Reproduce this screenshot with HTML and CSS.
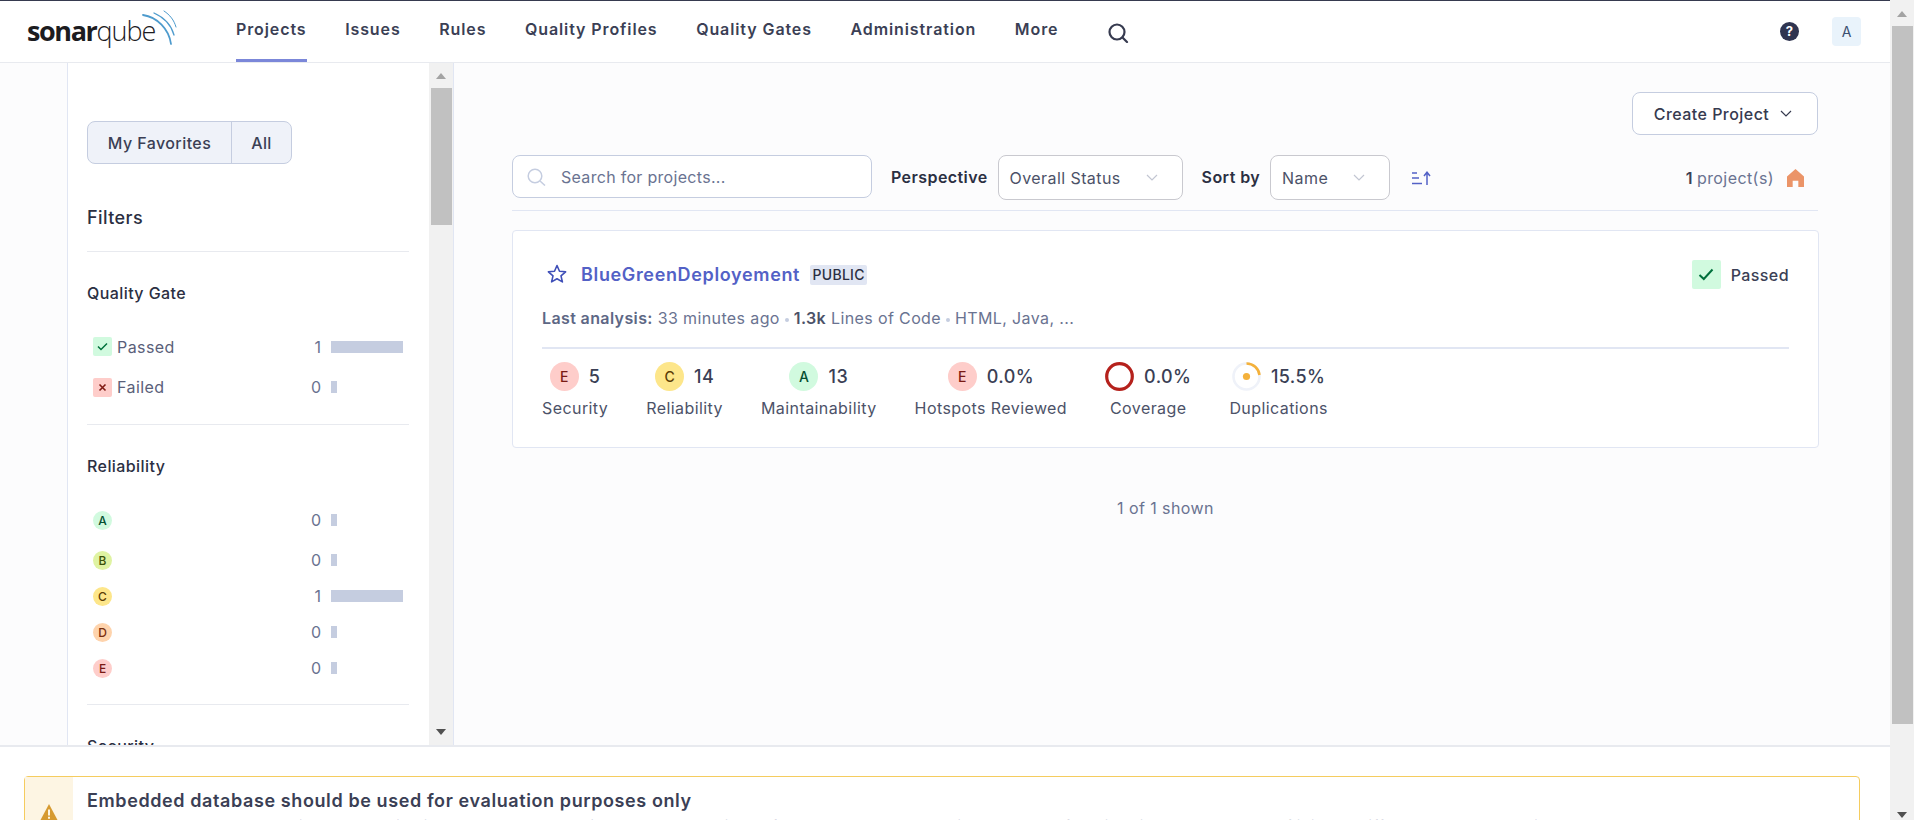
FILE: index.html
```html
<!DOCTYPE html>
<html lang="en">
<head>
<meta charset="utf-8">
<title>Projects - SonarQube</title>
<link rel="stylesheet" href="styles.css">
</head>
<body>
<div class="viewport">
  <header class="topbar">
    <a class="logo">
      <span class="logo-sonar">sonar</span><span class="logo-qube">qube</span>
      <svg class="logo-waves" width="40" height="40" viewBox="0 0 40 40" fill="none" stroke="#4e9bcd" stroke-linecap="round">
        <path d="M1 7C15 9 27 21 29 36" stroke-width="1.8"/>
        <path d="M12 5C21 9 29 16 32 27" stroke-width="1.3"/>
        <path d="M22 3C28 7 32 12 34 19" stroke-width="1"/>
      </svg>
    </a>
    <nav class="nav">
      <a class="nav-item active">Projects</a>
      <a class="nav-item">Issues</a>
      <a class="nav-item">Rules</a>
      <a class="nav-item">Quality Profiles</a>
      <a class="nav-item">Quality Gates</a>
      <a class="nav-item">Administration</a>
      <a class="nav-item">More</a>
    </nav>
    <svg class="nav-search" width="22" height="20" viewBox="0 0 22 20" fill="none" stroke="#363a4f" stroke-width="2.2"><circle cx="10" cy="9" r="7.5"/><path d="M15.5 14.5L20 19" stroke-linecap="round"/></svg>
    <div class="topbar-right">
      <span class="help">?</span>
      <span class="avatar">A</span>
    </div>
  </header>

  <div class="content">
    <div class="rail"></div>
    <aside class="sidebar">
      <div class="sidebar-inner">
        <div class="toggle"><span class="toggle-item">My Favorites</span><span class="toggle-item">All</span></div>
        <h2 class="filters-title">Filters</h2>
        <section class="facet">
          <h3 class="facet-title">Quality Gate</h3>
          <div class="facet-row r41"><span class="sq green"><svg width="11" height="9" viewBox="0 0 11 9" fill="none" stroke="#00703c" stroke-width="1.5"><path d="M1 4.5L4 7.5L10 1.5"/></svg></span><span class="facet-label">Passed</span><span class="count">1</span><span class="bar-cell"><i class="bar full"></i></span></div>
          <div class="facet-row r40"><span class="sq red"><svg width="9" height="9" viewBox="0 0 9 9" fill="none" stroke="#801b14" stroke-width="1.6"><path d="M1.5 1.5L7.5 7.5M7.5 1.5L1.5 7.5"/></svg></span><span class="facet-label">Failed</span><span class="count">0</span><span class="bar-cell"><i class="bar"></i></span></div>
        </section>
        <section class="facet rel">
          <h3 class="facet-title">Reliability</h3>
          <div class="facet-row r44"><span class="badge-sm a">A</span><span class="spacer"></span><span class="count">0</span><span class="bar-cell"><i class="bar"></i></span></div>
          <div class="facet-row r36"><span class="badge-sm b">B</span><span class="spacer"></span><span class="count">0</span><span class="bar-cell"><i class="bar"></i></span></div>
          <div class="facet-row r36"><span class="badge-sm c">C</span><span class="spacer"></span><span class="count">1</span><span class="bar-cell"><i class="bar full"></i></span></div>
          <div class="facet-row r36"><span class="badge-sm d">D</span><span class="spacer"></span><span class="count">0</span><span class="bar-cell"><i class="bar"></i></span></div>
          <div class="facet-row r36"><span class="badge-sm e">E</span><span class="spacer"></span><span class="count">0</span><span class="bar-cell"><i class="bar"></i></span></div>
        </section>
        <section class="facet last"><h3 class="facet-title">Security</h3></section>
      </div>
      <div class="scroll scroll-side">
        <i class="arrow up light"></i><i class="thumb side-thumb"></i><i class="grow"></i><i class="arrow down"></i>
      </div>
    </aside>

    <main class="main">
      <div class="actions">
        <button class="btn-create">Create Project<svg width="12" height="7" viewBox="0 0 12 7" fill="none" stroke="#363a4f" stroke-width="1.2"><path d="M1 1L6 6L11 1"/></svg></button>
      </div>
      <div class="toolbar">
        <label class="search">
          <svg width="20" height="18" viewBox="0 0 20 18" fill="none" stroke="#c5cde0" stroke-width="1.5"><circle cx="8" cy="8" r="6.8"/><path d="M13 13L18 17.5"/></svg>
          <span class="placeholder">Search for projects...</span>
        </label>
        <span class="tb-label first">Perspective</span>
        <div class="select w-persp"><span>Overall Status</span><svg width="12" height="7" viewBox="0 0 12 7" fill="none" stroke="#c2c6d2" stroke-width="1.2"><path d="M1 1L6 6L11 1"/></svg></div>
        <span class="tb-label">Sort by</span>
        <div class="select w-sort"><span>Name</span><svg width="12" height="7" viewBox="0 0 12 7" fill="none" stroke="#c2c6d2" stroke-width="1.2"><path d="M1 1L6 6L11 1"/></svg></div>
        <svg class="sort-icon" width="20" height="14" viewBox="0 0 20 14" fill="none" stroke="#5361c6" stroke-width="1.5"><path d="M1 2H6M1 7H8M1 12.5H11"/><path d="M16 14V1.5M13 5L16 1.2L19 5"/></svg>
        <div class="total"><b>1</b> <span>project(s)</span>
          <svg width="17" height="18" viewBox="0 0 18 19"><path fill="#eb9468" d="M9 0L18 8V19H12V12.5H6V19H0V8Z"/></svg>
        </div>
      </div>

      <article class="card">
        <div class="card-head">
          <svg class="star" width="20" height="19" viewBox="0 0 20 19" fill="none" stroke="#3f4fb8" stroke-width="1.6" stroke-linejoin="round"><path d="M10 1.5L12.5 7.2L18.6 7.8L14 11.9L15.4 17.9L10 14.8L4.6 17.9L6 11.9L1.4 7.8L7.5 7.2Z"/></svg>
          <a class="project-name">BlueGreenDeployement</a>
          <span class="tag">PUBLIC</span>
          <span class="qg"><span class="qg-icon"><svg width="16" height="13" viewBox="0 0 16 13" fill="none" stroke="#00703c" stroke-width="2"><path d="M1.5 7L5.8 11L14.5 1.5"/></svg></span>Passed</span>
        </div>
        <p class="meta"><b>Last analysis:</b> 33 minutes ago<i class="dot"></i><b class="dark">1.3k</b> Lines of Code<i class="dot"></i>HTML, Java, ...</p>
        <div class="measures">
          <div class="measure"><div class="m-top"><span class="badge e">E</span><span class="m-val">5</span></div><div class="m-label">Security</div></div>
          <div class="measure"><div class="m-top"><span class="badge c">C</span><span class="m-val">14</span></div><div class="m-label">Reliability</div></div>
          <div class="measure"><div class="m-top"><span class="badge a">A</span><span class="m-val">13</span></div><div class="m-label">Maintainability</div></div>
          <div class="measure"><div class="m-top"><span class="badge e">E</span><span class="m-val">0.0%</span></div><div class="m-label">Hotspots Reviewed</div></div>
          <div class="measure"><div class="m-top"><svg class="ring" width="29" height="29" viewBox="0 0 29 29" fill="none"><circle cx="14.5" cy="14.5" r="12.8" stroke="#b5211c" stroke-width="3.2"/></svg><span class="m-val">0.0%</span></div><div class="m-label">Coverage</div></div>
          <div class="measure"><div class="m-top"><svg class="ring" width="29" height="29" viewBox="0 0 29 29" fill="none"><circle cx="14.5" cy="14.5" r="13" stroke="#eff2f9" stroke-width="2.6"/><path d="M14.5 1.5A13 13 0 0 1 27.5 13" stroke="#f4b13b" stroke-width="2.6"/><circle cx="14.5" cy="14.5" r="3.6" fill="#f4b13b"/></svg><span class="m-val">15.5%</span></div><div class="m-label">Duplications</div></div>
        </div>
      </article>
      <p class="shown">1 of 1 shown</p>
    </main>
  </div>

  <footer class="footer">
    <div class="warning">
      <div class="warning-icon"><svg width="18" height="17" viewBox="0 0 18 17"><path fill="#d69a30" d="M9 0L18 17H0Z"/><path fill="#fdf5e3" d="M8 5.5H10V11.5H8ZM8 12.8H10V14.8H8Z"/></svg></div>
      <div class="warning-body">
        <div class="warning-title">Embedded database should be used for evaluation purposes only</div>
        <div class="warning-text">The embedded database will not scale, it will not support upgrading to newer versions of SonarQube, and there is no support for migrating your data out of it into a different database engine.</div>
      </div>
    </div>
  </footer>
</div>
<div class="scroll scroll-page">
  <i class="arrow up light"></i><i class="thumb page-thumb"></i><i class="grow"></i><i class="arrow down"></i>
</div>
</body>
</html>
```

FILE: styles.css
```css
* { box-sizing: border-box; }
html, body { margin: 0; height: 100%; overflow: hidden; }
body {
  display: flex;
  width: 1914px;
  height: 820px;
  font-family: Inter, "Liberation Sans", sans-serif;
  font-size: 16px;
  letter-spacing: .42px;
  color: #363a4f;
  background: #fff;
}
h2, h3, p { margin: 0; }
.viewport { flex: 1; min-width: 0; display: flex; flex-direction: column; height: 820px; }

/* top bar */
.topbar {
  flex: 0 0 63px;
  display: flex;
  align-items: center;
  padding-left: 27px;
  border-top: 1px solid #363a4f;
  border-bottom: 1px solid #e8eaef;
  background: #fff;
}
.logo { position: relative; width: 209px; height: 61px; display: block; font-family: "Open Sans", sans-serif; font-size: 27px; line-height: 59px; letter-spacing: -1.4px; color: #1c1c1f; white-space: nowrap; }
.logo-sonar { font-weight: 700; }
.logo-qube { font-weight: 300; letter-spacing: -1px; }
.logo-waves { position: absolute; left: 115px; top: 7px; }
.nav { display: flex; gap: 38.6px; height: 61px; }
.nav-item {
  display: flex; align-items: center; height: 61px; padding-bottom: 3px;
  font-weight: 600; letter-spacing: .9px; color: #3b3f55;
  border-bottom: 3px solid transparent; white-space: nowrap;
}
.nav-item.active { border-bottom-color: #7b87d9; }
.nav-search { margin-left: 49px; margin-top: 2px; }
.topbar-right { margin-left: auto; display: flex; align-items: center; gap: 33px; padding-right: 29px; }
.help { width: 19px; height: 19px; border-radius: 50%; background: #2f3450; color: #fff; font-size: 13px; font-weight: 700; line-height: 19px; text-align: center; letter-spacing: 0; }
.avatar { width: 29px; height: 29px; border-radius: 4px; background: #e9f3fb; color: #3b4f70; font-size: 14px; line-height: 29px; text-align: center; letter-spacing: 0; }

/* columns */
.content { flex: 1; min-height: 0; display: flex; background: #fcfcfd; }
.rail { flex: 0 0 68px; border-right: 1px solid #e1e6f3; }
.sidebar { flex: 0 0 386px; display: flex; background: #fff; border-right: 1px solid #e1e6f3; overflow: hidden; }
.sidebar-inner { flex: 1; min-width: 0; padding: 58px 20px 0 19px; overflow: hidden; }

.toggle { display: inline-flex; height: 43px; width: 205px; border: 1px solid #c5cde0; border-radius: 8px; background: #eff2f9; }
.toggle-item { display: flex; align-items: center; justify-content: center; font-weight: 500; color: #3b3f55; }
.toggle-item:first-child { flex: 0 0 144px; border-right: 1px solid #c5cde0; }
.toggle-item:last-child { flex: 1; }
.filters-title { margin-top: 39px; height: 29px; font-size: 18px; font-weight: 500; line-height: 29px; color: #2b2f42; }
.facet { border-top: 1px solid #e8eaef; margin-top: 19px; }
.facet.rel { margin-top: 17px; }
.facet-title { margin-top: 29px; margin-bottom: 21px; height: 24px; font-size: 16px; font-weight: 500; line-height: 24px; color: #2b2f42; }
.facet.rel .facet-title { margin-bottom: 20px; }
.facet.last { margin-top: 18px; }
.facet-row { display: flex; align-items: center; padding-left: 6px; }
.r40 { height: 40px; }
.r41 { height: 41px; }
.r44 { height: 44px; }
.r36 { height: 36px; }
.facet-label { flex: 1; margin-left: 5px; color: #5a6079; }
.spacer { flex: 1; }
.count { color: #6a7391; width: 20px; text-align: right; letter-spacing: 0; }
.bar-cell { flex: 0 0 88px; padding-left: 10px; display: flex; }
.bar { display: block; width: 6px; height: 12px; background: #c5cde0; }
.bar.full { width: 72px; }
.sq { width: 19px; height: 19px; border-radius: 2px; display: flex; align-items: center; justify-content: center; }
.sq.green { background: #d1fadf; }
.sq.red { background: #fecdca; }
.badge-sm { width: 19px; height: 19px; border-radius: 50%; font-size: 12px; font-weight: 500; line-height: 19px; text-align: center; letter-spacing: 0; }

.a { background: #d1fadf; color: #054f31; }
.b { background: #dff3a2; color: #3b5108; }
.c { background: #fde68a; color: #5c3d05; }
.d { background: #fed3ac; color: #7a2e0c; }
.e { background: #fecdca; color: #7a1a14; }

/* fake scrollbars */
.scroll { display: flex; flex-direction: column; align-items: center; background: #f1f1f1; }
.scroll-side { flex: 0 0 24px; padding-top: 10px; padding-bottom: 10px; }
.scroll-page { flex: 0 0 24px; height: 820px; padding-top: 11px; padding-bottom: 2px; }
.arrow { display: block; width: 0; height: 0; border-left: 5.5px solid transparent; border-right: 5.5px solid transparent; }
.arrow.up { border-bottom: 6px solid #a3a3a3; }
.arrow.down { border-top: 6px solid #505050; }
.thumb { display: block; width: 21px; background: #c1c1c1; }
.side-thumb { height: 137px; margin-top: 9px; }
.page-thumb { height: 698px; margin-top: 9px; }
.grow { flex: 1; }

/* main */
.main { flex: 1; min-width: 0; padding: 29px 71px 0 58px; }
.actions { display: flex; justify-content: flex-end; padding-right: 1px; }
.btn-create {
  width: 186px; height: 43px; padding: 0 4px 0 0; display: flex; align-items: center; justify-content: center; gap: 11px;
  font: 500 16px Inter, sans-serif; letter-spacing: .45px; color: #363a4f; background: #fff;
  border: 1px solid #c5cde0; border-radius: 8px;
}
.toolbar {
  margin-top: 20px; margin-right: 1px; height: 56px; display: flex; align-items: flex-start;
  border-bottom: 1px solid #e1e6f3;
}
.search { width: 360px; height: 43px; padding-left: 14px; display: flex; align-items: center; gap: 14px; background: #fff; border: 1px solid #c5cde0; border-radius: 8px; }
.placeholder { color: #6a7391; letter-spacing: .3px; }
.tb-label { margin-left: 19px; margin-right: 10px; height: 45px; line-height: 45px; font-weight: 600; color: #2b2f42; white-space: nowrap; }
.select { flex: none; height: 45px; display: flex; align-items: center; justify-content: space-between; padding: 0 24px 0 11px; background: #fff; border: 1px solid #c9c9cf; border-radius: 8px; color: #4c5268; }
.w-persp { width: 185px; }
.w-sort { width: 120px; }
.sort-icon { margin-left: 21px; margin-top: 16px; }
.total { margin-left: auto; margin-right: 14px; height: 45px; display: flex; align-items: center; gap: 4px; color: #6a7391; }
.total b { font-weight: 600; color: #3b3f55; }
.total svg { margin-left: 9px; }

.card { margin-top: 19px; height: 218px; padding: 29px 29px 0 29px; background: #fff; border: 1px solid #e1e6f3; border-radius: 4px; }
.card-head { display: flex; align-items: center; height: 29px; }
.star { margin-left: 5px; margin-top: -2px; }
.project-name { margin-left: 14px; font-size: 18px; font-weight: 600; letter-spacing: .65px; color: #5361c6; white-space: nowrap; }
.tag { margin-left: 10px; width: 57px; height: 20px; font-size: 14px; font-weight: 500; line-height: 20px; text-align: center; background: #e1e6f3; border-radius: 2px; color: #2b2f42; margin-top: 1px; letter-spacing: .3px; }
.qg { margin-left: auto; display: flex; align-items: center; gap: 10px; font-weight: 500; color: #3b3f55; }
.qg-icon { width: 29px; height: 29px; border-radius: 2px; background: #d1fadf; display: flex; align-items: center; justify-content: center; }
.meta { margin-top: 15px; height: 29px; line-height: 29px; letter-spacing: .38px; color: #6a7391; white-space: nowrap; }
.meta b { font-weight: 600; color: #5d6785; }
.meta b.dark { color: #4c5268; }
.dot { display: inline-block; width: 4px; height: 4px; margin: 0 5px; border-radius: 50%; background: #c5cde0; vertical-align: middle; }
.measures { display: flex; gap: 38px; margin-top: 14px; padding-top: 13px; border-top: 2px solid #e1e6f3; }
.measure { display: flex; flex-direction: column; align-items: center; }
.m-top { display: flex; align-items: center; gap: 10px; height: 29px; }
.badge { width: 29px; height: 29px; border-radius: 50%; font-size: 14px; font-weight: 500; line-height: 29px; text-align: center; letter-spacing: 0; }
.m-val { font-size: 18px; font-weight: 500; color: #3b3f55; }
.m-label { margin-top: 5px; height: 24px; line-height: 24px; color: #4c5268; white-space: nowrap; }
.shown { margin-top: 48px; height: 24px; line-height: 24px; text-align: center; color: #6a7391; }

/* footer */
.footer { flex: 0 0 75px; overflow: hidden; padding: 29px 30px 0 24px; border-top: 2px solid #e8eaef; background: #fff; }
.warning { display: flex; height: 90px; border: 1px solid #f5cc5f; border-radius: 4px; }
.warning-icon { flex: 0 0 48px; background: #fdf5e3; display: flex; justify-content: center; padding-top: 27px; }
.warning-body { padding: 12px 0 0 14px; white-space: nowrap; }
.warning-title { height: 25px; font-size: 18px; font-weight: 600; letter-spacing: .6px; line-height: 24px; color: #3b3f55; }
.warning-text { line-height: 24px; letter-spacing: .22px; color: #6a7391; }
```
